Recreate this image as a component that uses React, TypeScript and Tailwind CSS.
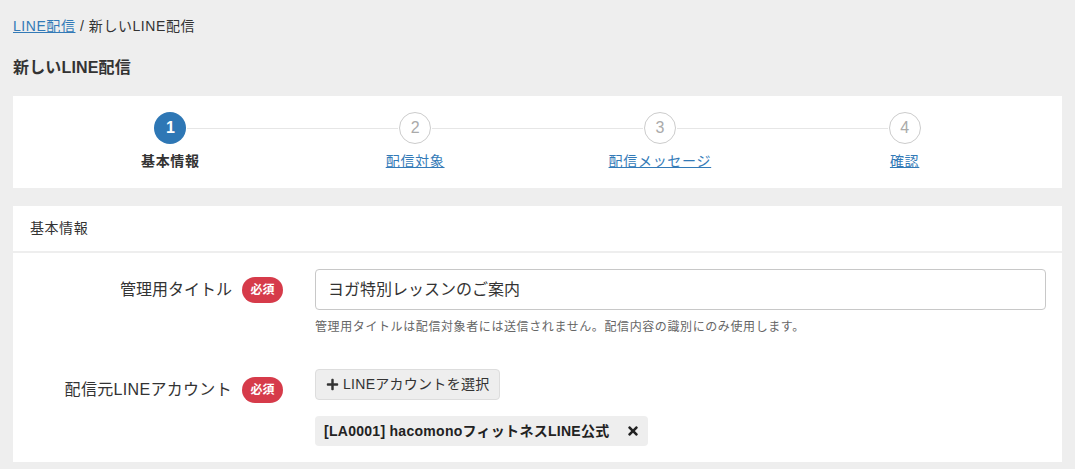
import React from "react";
import { FaPlus, FaTimes } from "react-icons/fa";

const steps = [
  { n: 1, label: "基本情報", active: true },
  { n: 2, label: "配信対象", active: false },
  { n: 3, label: "配信メッセージ", active: false },
  { n: 4, label: "確認", active: false },
];

function Badge() {
  return (
    <span className="inline-flex h-[26px] w-[41px] items-center justify-center rounded-full bg-[#d63b4a] text-[12px] font-bold text-white">
      必須
    </span>
  );
}

export default function App() {
  return (
    <div
      className="min-h-screen bg-[#eeeeee] px-[13px] pt-[16px] pb-[7px] text-[#333333]"
      style={{ fontFamily: '"Liberation Sans", "Noto Sans CJK JP", sans-serif' }}
    >
      <div className="text-[14px] leading-[20px] tracking-[0.04em]">
        <a className="text-[#337ab7] underline" href="#">
          LINE配信
        </a>
        <span> / 新しいLINE配信</span>
      </div>
      <h1 className="mt-[21px] text-[16px] font-bold leading-[22px] tracking-[0.01em]">新しいLINE配信</h1>

      <div className="mt-[17px] h-[92px] bg-white px-[35px] pt-[16px]">
        <div className="grid grid-cols-4">
          {steps.map((s, i) => (
            <div key={s.n} className="relative flex flex-col items-center">
              {i < steps.length - 1 && (
                <div className="absolute top-[16px] left-[calc(50%+17px)] right-[calc(-50%+17px)] h-px bg-[#e6e6e6]" />
              )}
              {s.active ? (
                <div className="flex h-[32px] w-[32px] items-center justify-center rounded-full bg-[#2e77b5] text-[16px] font-bold text-white">
                  {s.n}
                </div>
              ) : (
                <div className="flex h-[32px] w-[32px] items-center justify-center rounded-full border border-[#cccccc] bg-white text-[16px] text-[#aaaaaa]">
                  {s.n}
                </div>
              )}
              {s.active ? (
                <div className="mt-[7px] text-[14px] font-bold leading-[20px] tracking-[0.05em] text-[#333333]">{s.label}</div>
              ) : (
                <a href="#" className="mt-[7px] text-[14px] leading-[20px] tracking-[0.05em] text-[#337ab7] underline">
                  {s.label}
                </a>
              )}
            </div>
          ))}
        </div>
      </div>

      <div className="mt-[18px] bg-white">
        <div className="flex h-[47px] items-center border-b-2 border-[#eeeeee] px-[17px] text-[14px] tracking-[0.04em]">
          基本情報
        </div>
        <div className="pt-[16px] pb-[16px] pr-[16px]">
          <div className="flex">
            <div className="flex h-[41px] w-[270px] shrink-0 items-center justify-end gap-[10px]">
              <span className="text-[16px]">管理用タイトル</span>
              <Badge />
            </div>
            <div className="ml-[32px] flex-1">
              <div className="flex h-[41px] items-center rounded-[4px] border border-[#c8c8c8] px-[12px] text-[16px]">
                ヨガ特別レッスンのご案内
              </div>
              <div className="mt-[8px] text-[12px] leading-[18px] tracking-[0.05em] text-[#666666]">
                管理用タイトルは配信対象者には送信されません。配信内容の識別にのみ使用します。
              </div>
            </div>
          </div>

          <div className="mt-[33px] flex">
            <div className="flex w-[270px] shrink-0 items-center justify-end gap-[10px] pt-[8px] self-start">
              <span className="text-[16px] tracking-[0.02em]">配信元LINEアカウント</span>
              <Badge />
            </div>
            <div className="ml-[32px] flex flex-1 flex-col items-start">
              <button className="flex h-[31px] items-center gap-[4px] rounded-[4px] border border-[#dddddd] bg-[#eeeeee] px-[10px] text-[14px] tracking-[0.02em] text-[#333333]">
                <FaPlus className="text-[13px]" />
                <span>LINEアカウントを選択</span>
              </button>
              <div className="mt-[16px] flex h-[30px] items-center gap-[16px] rounded-[4px] bg-[#eeeeee] pl-[9px] pr-[8px] text-[14px] font-bold tracking-[0.02em] text-[#222222]">
                <span>[LA0001] hacomonoフィットネスLINE公式</span>
                <FaTimes className="text-[14px]" />
              </div>
            </div>
          </div>
        </div>
      </div>
    </div>
  );
}
